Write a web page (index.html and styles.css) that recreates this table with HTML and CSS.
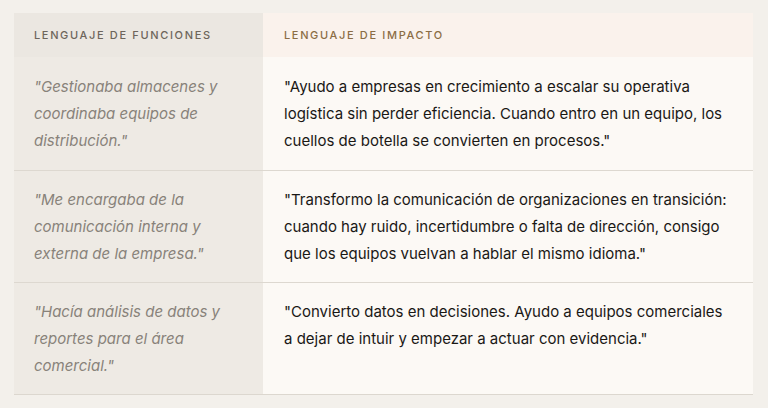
FILE: index.html
```html
<!DOCTYPE html>
<html lang="es">
<head>
<meta charset="utf-8">
<link rel="stylesheet" href="styles.css">
</head>
<body>
<div class="table">
  <div class="cell head left">LENGUAJE DE FUNCIONES</div>
  <div class="cell head right">LENGUAJE DE IMPACTO</div>

  <div class="cell body left first">"Gestionaba almacenes y coordinaba equipos de distribución."</div>
  <div class="cell body right first">"Ayudo a empresas en crecimiento a escalar su operativa logística sin perder eficiencia. Cuando entro en un equipo, los cuellos de botella se convierten en procesos."</div>

  <div class="cell body left">"Me encargaba de la comunicación interna y externa de la empresa."</div>
  <div class="cell body right">"Transformo la comunicación de organizaciones en transición: cuando hay ruido, incertidumbre o falta de dirección, consigo que los equipos vuelvan a hablar el mismo idioma."</div>

  <div class="cell body left">"Hacía análisis de datos y reportes para el área comercial."</div>
  <div class="cell body right">"Convierto datos en decisiones. Ayudo a equipos comerciales a dejar de intuir y empezar a actuar con evidencia."</div>
</div>
</body>
</html>
```

FILE: styles.css
```css
html, body {
  margin: 0;
  padding: 0;
  background: #f3f0eb;
}
body {
  padding: 13px 14px 0 14px;
  font-family: Inter, "DejaVu Sans", sans-serif;
}
.table {
  display: grid;
  grid-template-columns: 249px 1fr;
  width: 739px;
  border-bottom: 1px solid #dcd7cf;
}
.cell {
  box-sizing: border-box;
}
.head {
  height: 44px;
  display: flex;
  align-items: center;
  font-size: 11px;
  letter-spacing: 1.65px;
  font-weight: 500;
}
.head.left {
  background: #ebe7e1;
  color: #6d655b;
  padding-left: 20px;
}
.head.right {
  background: #faf2ec;
  color: #8b6d44;
  padding-left: 21px;
}
.body {
  padding: 15px 20px 15px 20px;
  font-size: 15px;
  line-height: 27px;
  border-top: 1px solid #ddd8d0;
}
.body.first {
  border-top: none;
  padding-top: 16px;
  padding-bottom: 16px;
}
.body.left {
  background: #eeeae4;
  color: #88827a;
  font-style: italic;
  font-weight: 400;
  padding-right: 30px;
}
.body.right {
  background: #fcf9f5;
  color: #1a1815;
  padding-left: 21px;
  padding-right: 18px;
}
```
